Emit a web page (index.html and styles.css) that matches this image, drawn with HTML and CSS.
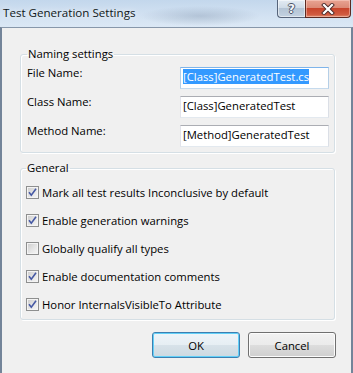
FILE: index.html
```
<!DOCTYPE html>
<html lang="en">
<head>
    <meta charset="UTF-8">
    <title>Test Generation Settings</title>
    <link rel="stylesheet" href="styles.css">
</head>
<body>
    <div class="window">
        <header class="titlebar">
            <span class="title">Test Generation Settings</span>
            <div class="caption">
                <div class="cap help"><span>?</span></div>
                <div class="cap close">
                    <svg width="14" height="12" viewBox="0 0 14 12">
                        <path d="M3 2 L11 10 M11 2 L3 10" stroke="#4a2a2a" stroke-width="4" stroke-linecap="square"/>
                        <path d="M3 2 L11 10 M11 2 L3 10" stroke="#ffffff" stroke-width="2.2" stroke-linecap="square"/>
                    </svg>
                </div>
            </div>
        </header>

        <main class="client">
            <fieldset class="group naming">
                <legend>Naming settings</legend>
                <div class="field-grid">
                    <label>File Name:</label>
                    <div class="textbox focused"><span class="sel">[Class]GeneratedTest.cs</span></div>
                    <label>Class Name:</label>
                    <div class="textbox">[Class]GeneratedTest</div>
                    <label>Method Name:</label>
                    <div class="textbox">[Method]GeneratedTest</div>
                </div>
            </fieldset>

            <fieldset class="group general">
                <legend>General</legend>
                <ul class="checks">
                    <li><span class="box checked"><svg width="11" height="11" viewBox="0 0 11 11"><path d="M2 5.2 L4.3 8.2 L9 1.8" fill="none" stroke="#4659a4" stroke-width="1.6"/></svg></span>Mark all test results Inconclusive by default</li>
                    <li><span class="box checked"><svg width="11" height="11" viewBox="0 0 11 11"><path d="M2 5.2 L4.3 8.2 L9 1.8" fill="none" stroke="#4659a4" stroke-width="1.6"/></svg></span>Enable generation warnings</li>
                    <li><span class="box"></span>Globally qualify all types</li>
                    <li><span class="box checked"><svg width="11" height="11" viewBox="0 0 11 11"><path d="M2 5.2 L4.3 8.2 L9 1.8" fill="none" stroke="#4659a4" stroke-width="1.6"/></svg></span>Enable documentation comments</li>
                    <li><span class="box checked"><svg width="11" height="11" viewBox="0 0 11 11"><path d="M2 5.2 L4.3 8.2 L9 1.8" fill="none" stroke="#4659a4" stroke-width="1.6"/></svg></span>Honor InternalsVisibleTo Attribute</li>
                </ul>
            </fieldset>

            <div class="actions">
                <button class="btn default">OK</button>
                <button class="btn">Cancel</button>
            </div>
        </main>
    </div>
</body>
</html>
```

FILE: styles.css
```
* {
    box-sizing: border-box;
}

body {
    margin: 0;
    width: 353px;
    height: 373px;
    overflow: hidden;
    font-family: "Open Sans", sans-serif;
    font-size: 11.3px;
    color: #000;
    background: #cbdcee;
}

.window {
    display: flex;
    flex-direction: column;
    height: 373px;
}

/* title bar */
.titlebar {
    height: 27px;
    flex: none;
    display: flex;
    justify-content: space-between;
    align-items: flex-start;
    background: radial-gradient(ellipse 60px 10px at 200px 16px, rgba(120, 140, 165, 0.35), transparent),
                linear-gradient(to bottom, #c3d7ec 0%, #d3e2f2 60%, #dbe8f5 100%);
}

.title {
    padding: 5px 0 0 3px;
    font-size: 11.6px;
    line-height: 16px;
    color: #101820;
    text-shadow: 0 0 6px rgba(255, 255, 255, 0.9);
}

.caption {
    display: flex;
    margin-right: 2px;
}

.cap {
    height: 18px;
    display: flex;
    align-items: center;
    justify-content: center;
    border: 1px solid #56647a;
    border-top: none;
}

.help {
    width: 28px;
    border-right: none;
    border-radius: 0 0 0 4px;
    background: linear-gradient(to bottom, #e3ebf3 0%, #cfdbe7 45%, #b4c4d5 50%, #c3d2e1 100%);
    box-shadow: inset 0 0 0 1px rgba(255, 255, 255, 0.5);
}

.help span {
    font-family: "DejaVu Sans", sans-serif;
    font-weight: bold;
    font-size: 12px;
    line-height: 14px;
    color: #f4f6f9;
    text-shadow: -1px 0 #4b5568, 1px 0 #4b5568, 0 -1px #4b5568, 0 1px #4b5568;
}

.close {
    width: 46px;
    border-color: #5c2a22;
    border-radius: 0 0 4px 0;
    background: linear-gradient(to bottom, #e8a493 0%, #dc8a76 45%, #c8452c 50%, #d05a40 85%, #e08a6c 100%);
    box-shadow: inset 0 0 0 1px rgba(255, 220, 210, 0.45);
}

/* client area */
.client {
    flex: 1;
    background: #f0f0f0;
    border-top: 1px solid #8797aa;
    border-left: 2px solid #738499;
    border-right: 2px solid #738499;
    padding: 18px 16px 0 18px;
}

.group {
    margin: 0;
    min-width: 0;
    border: 1px solid #d5dfe5;
    border-radius: 3px;
    box-shadow: 1px 1px 0 #fff, inset 1px 1px 0 #fff;
}

.group legend {
    padding: 0 1px;
    line-height: 16px;
}

.naming {
    padding: 5px 5px 5px 6px;
}

.field-grid {
    display: grid;
    grid-template-columns: 1fr 149px;
    row-gap: 7px;
}

.field-grid label {
    line-height: 15px;
    margin-top: -2px;
}

.textbox {
    height: 22px;
    border: 1px solid;
    border-color: #abadb3 #dbdfe6 #e3e9ef #e2e3ea;
    background: #fff;
    padding: 1px 2px 0 2px;
    line-height: 16px;
    white-space: nowrap;
    overflow: hidden;
}

.textbox.focused {
    border-color: #7eb4ea #b5cfe7 #c5daed #b5cfe7;
}

.sel {
    background: #3399ff;
    color: #fff;
}

.general {
    margin-top: 7px;
    padding: 2px 5px 1px 5px;
}

.checks {
    list-style: none;
    margin: 0;
    padding: 0;
}

.checks li {
    height: 28px;
    display: flex;
    align-items: center;
    gap: 3px;
}

.box {
    width: 13px;
    height: 13px;
    flex: none;
    display: flex;
    align-items: center;
    justify-content: center;
    border: 1px solid #8e8f8f;
    background: linear-gradient(135deg, #cbcbcb 0%, #e6e6e6 55%, #f6f6f6 100%);
    box-shadow: inset 0 0 0 1px #f4f4f4;
}

/* buttons */
.actions {
    display: flex;
    justify-content: flex-end;
    gap: 8px;
    margin: 12px -1px 0 0;
}

.btn {
    width: 88px;
    height: 26px;
    padding: 0;
    font-family: inherit;
    font-size: 11.3px;
    color: #000;
    border: 1px solid #707070;
    border-radius: 3px;
    background: linear-gradient(to bottom, #f2f2f2 0%, #ebebeb 50%, #dddddd 51%, #cfcfcf 100%);
    box-shadow: inset 0 0 0 1px #fcfcfc;
}

.btn.default {
    border-color: #3c7fb1;
    background: linear-gradient(to bottom, #eef5f9 0%, #e6eef3 50%, #d7e2e9 51%, #cdd9e1 100%);
    box-shadow: inset 0 0 0 1px #62d0f8;
}
```
